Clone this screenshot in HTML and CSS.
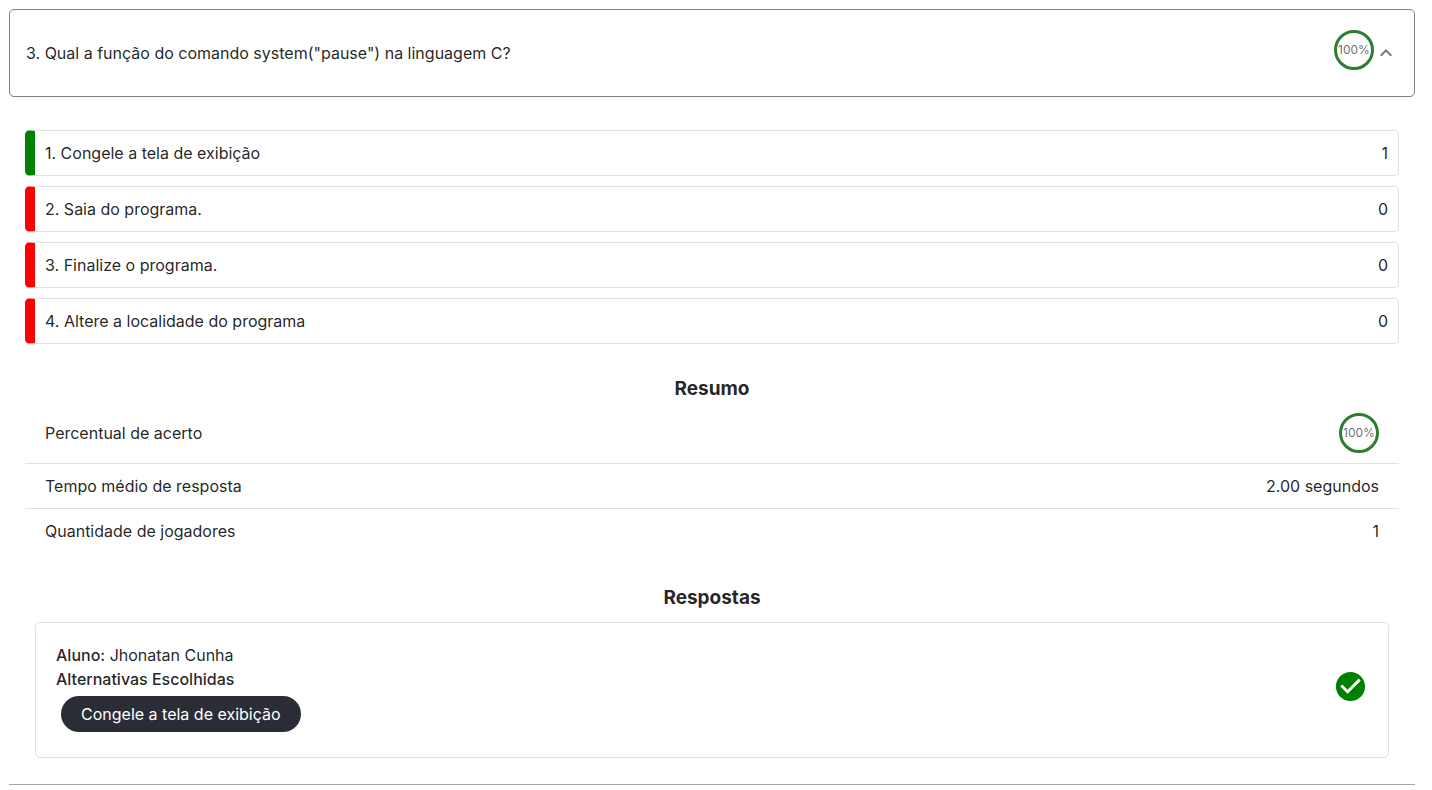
FILE: index.html
```html
<!DOCTYPE html>
<html lang="pt-BR">
<head>
<meta charset="utf-8">
<title>Relatório da questão</title>
<link rel="stylesheet" href="styles.css">
</head>
<body>
<main class="accordion">
  <button class="summary" type="button" aria-expanded="true" aria-controls="details">
    <span class="question">3. Qual a função do comando system("pause") na linguagem C?</span>
    <span class="score">100%</span>
    <svg class="chevron" viewBox="0 0 24 24" aria-hidden="true"><path d="M12 8l-6 6 1.41 1.41L12 10.83l4.59 4.58L18 14z"/></svg>
  </button>
  <div class="details" id="details">
    <ul class="options">
      <li class="option correct"><span>1. Congele a tela de exibição</span><span>1</span></li>
      <li class="option"><span>2. Saia do programa.</span><span>0</span></li>
      <li class="option"><span>3. Finalize o programa.</span><span>0</span></li>
      <li class="option"><span>4. Altere a localidade do programa</span><span>0</span></li>
    </ul>
    <section>
      <h2>Resumo</h2>
      <dl class="stats">
        <div class="stat"><dt>Percentual de acerto</dt><dd class="score">100%</dd></div>
        <div class="stat"><dt>Tempo médio de resposta</dt><dd>2.00 segundos</dd></div>
        <div class="stat"><dt>Quantidade de jogadores</dt><dd>1</dd></div>
      </dl>
    </section>
    <section class="answers">
      <h2>Respostas</h2>
      <article class="answer">
        <div>
          <p><b>Aluno:</b> Jhonatan Cunha</p>
          <p><b>Alternativas Escolhidas</b></p>
          <span class="chip">Congele a tela de exibição</span>
        </div>
        <svg class="check" viewBox="0 0 24 24" role="img" aria-label="Correta"><path d="M12 2C6.48 2 2 6.48 2 12s4.48 10 10 10 10-4.48 10-10S17.52 2 12 2zm-2 15l-5-5 1.41-1.41L10 14.17l7.59-7.59L19 8l-9 9z"/></svg>
      </article>
    </section>
  </div>
</main>
</body>
</html>
```
FILE: styles.css
```css
* { box-sizing: border-box; }
body {
  margin: 9px 17px 5px 9px;
  background: #fff;
  color: rgba(0, 0, 0, 0.87);
  font: 16px/24px Inter, "Liberation Sans", sans-serif;
}
h2, p, ul, dl, dd { margin: 0; padding: 0; }
.summary {
  display: flex;
  align-items: center;
  width: 100%;
  min-height: 88px;
  padding: 0 16px;
  border: 1px solid #808080;
  border-radius: 5px;
  background: #fff;
  color: inherit;
  font: inherit;
  text-align: left;
}
.question { flex: 1; }
.score {
  display: grid;
  place-items: center;
  width: 40px;
  height: 40px;
  border: 3px solid #2e7d32;
  border-radius: 50%;
  color: rgba(0, 0, 0, 0.6);
  font-size: 12px;
  line-height: 20px;
}
.summary .score { margin-bottom: 6px; }
.chevron { width: 24px; height: 24px; fill: #757575; }
.details {
  margin: 0 -1px;
  padding: 33px 16px 26px;
  border: solid #e6e6e6;
  border-width: 0 1px 1px;
  border-bottom-color: #a6a6a6;
  box-shadow: 0 1px 2px rgba(0, 0, 0, 0.2);
}
.options { display: grid; gap: 10px; list-style: none; }
.option {
  display: flex;
  justify-content: space-between;
  padding: 10px;
  border: 1px solid #e0e0e0;
  border-left: 10px solid red;
  border-radius: 5px;
}
.correct { border-left-color: green; }
h2 { font-size: 19px; line-height: 24px; text-align: center; font-weight: 700; }
.details section { padding-top: 33px; }
.stats { padding-top: 2px; }
.stat {
  display: flex;
  align-items: center;
  justify-content: space-between;
  padding: 10px 20px;
  border-bottom: 1px solid #e0e0e0;
}
.stat:last-child { border-bottom: 0; }
.answer {
  display: flex;
  align-items: center;
  justify-content: space-between;
  margin: 12px 10px 0;
  padding: 20px;
  border: 1px solid #e0e0e0;
  border-radius: 5px;
}
.answer b { font-weight: 500; }
.chip {
  display: inline-block;
  margin: 5px;
  padding: 6px 20px;
  border-radius: 18px;
  background: #2b2d36;
  color: #fff;
}
.check { width: 35px; height: 35px; margin-bottom: 8px; fill: green; }
```
